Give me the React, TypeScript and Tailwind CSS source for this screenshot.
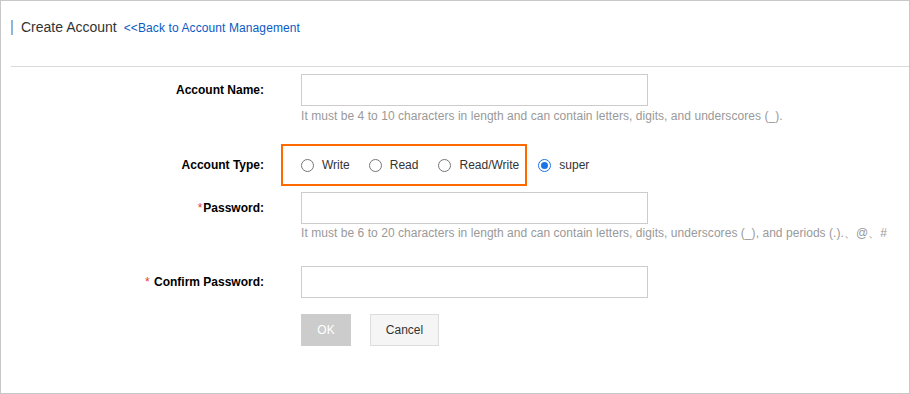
function Radio({ label, checked = false }: { label: string; checked?: boolean }) {
  return (
    <label className="flex items-center">
      {checked ? (
        <span className="w-[13px] h-[13px] rounded-full border-[1.5px] border-[#1a73e8] flex items-center justify-center">
          <span className="w-[7px] h-[7px] rounded-full bg-[#1a73e8]" />
        </span>
      ) : (
        <span className="w-[13px] h-[13px] rounded-full border border-[#767676] bg-white" />
      )}
      <span className="ml-[8px] text-[12px] text-[#333]">{label}</span>
    </label>
  )
}

function Label({ text, required = false, gap = false }: { text: string; required?: boolean; gap?: boolean }) {
  return (
    <div className="w-[263px] shrink-0 text-right text-[12px] font-bold text-[#000]">
      {required && <span className="text-[#e4393c] font-normal mr-[1px]">*</span>}
      {gap && ' '}
      {text}
    </div>
  )
}

export default function App() {
  return (
    <div className="w-[910px] h-[394px] bg-white border border-[#c8c8c8] font-['Liberation_Sans',Arial,sans-serif] text-[#333]">
      {/* header */}
      <div className="flex items-center ml-[10px] mt-[18px] h-[16px]">
        <span className="w-[2px] h-[15px] bg-[#88b7e0]" />
        <span className="ml-[8px] text-[14px] text-[#333]">Create Account</span>
        <a className="ml-[7px] text-[12px] text-[#0a5bc4] mt-[2px] tracking-[0.1px]">&lt;&lt;Back to Account Management</a>
      </div>
      <div className="ml-[10px] mt-[31px] border-t border-[#d9d9d9]" />

      {/* form */}
      <div className="mt-[7px]">
        <div className="flex items-center">
          <Label text="Account Name:" />
          <div className="ml-[37px] w-[347px] h-[32px] border border-[#ccc]" />
        </div>
        <div className="ml-[300px] mt-[2px] text-[12px] text-[#999] leading-[16px] tracking-[0.05px]">
          It must be 4 to 10 characters in length and can contain letters, digits, and underscores (_).
        </div>

        <div className="flex items-center mt-[20px]">
          <Label text="Account Type:" />
          <div className="flex items-center ml-[17px] h-[42px] pl-[18px] pr-[6px] border-2 border-[#ff6a00]">
            <Radio label="Write" />
            <div className="ml-[19px]"><Radio label="Read" /></div>
            <div className="ml-[20px]"><Radio label="Read/Write" /></div>
          </div>
          <div className="ml-[11px]"><Radio label="super" checked /></div>
        </div>

        <div className="flex items-center mt-[6px]">
          <Label text="Password:" required />
          <div className="ml-[37px] w-[347px] h-[32px] border border-[#ccc]" />
        </div>
        <div className="ml-[300px] mt-[1px] text-[12px] text-[#999] leading-[16px] tracking-[0.05px]">
          It must be 6 to 20 characters in length and can contain letters, digits, underscores (_), and periods (.).、@、#
        </div>

        <div className="flex items-center mt-[25px]">
          <Label text="Confirm Password:" required gap />
          <div className="ml-[37px] w-[347px] h-[32px] border border-[#ccc]" />
        </div>

        <div className="flex ml-[300px] mt-[16px]">
          <button className="w-[50px] h-[32px] bg-[#ccc] text-white text-[12px]">OK</button>
          <button className="ml-[19px] w-[69px] h-[32px] bg-[#f5f5f5] border border-[#ddd] text-[#333] text-[12px]">Cancel</button>
        </div>
      </div>
    </div>
  )
}
